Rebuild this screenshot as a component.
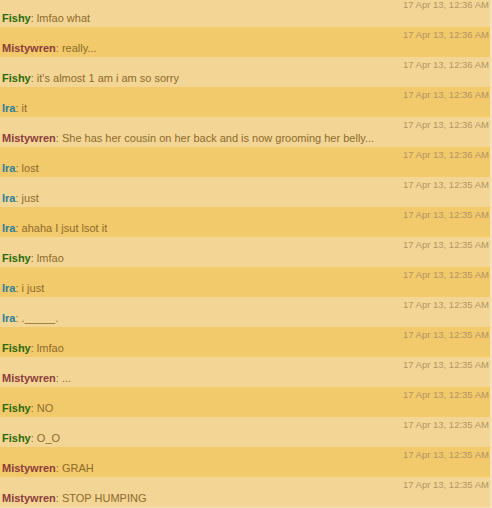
import React from "react";

const msgs = [
  ["Fishy", "lmfao what", "12:36"],
  ["Mistywren", "really...", "12:36"],
  ["Fishy", "it's almost 1 am i am so sorry", "12:36"],
  ["Ira", "it", "12:36"],
  ["Mistywren", "She has her cousin on her back and is now grooming her belly...", "12:36"],
  ["Ira", "lost", "12:36"],
  ["Ira", "just", "12:35"],
  ["Ira", "ahaha I jsut lsot it", "12:35"],
  ["Fishy", "lmfao", "12:35"],
  ["Ira", "i just", "12:35"],
  ["Ira", "._____.", "12:35"],
  ["Fishy", "lmfao", "12:35"],
  ["Mistywren", "...", "12:35"],
  ["Fishy", "NO", "12:35"],
  ["Fishy", "O_O", "12:35"],
  ["Mistywren", "GRAH", "12:35"],
  ["Mistywren", "STOP HUMPING", "12:35"],
];

const nameCls = {
  Fishy: "text-[#2c6b0c]",
  Mistywren: "text-[#8c3d3a]",
  Ira: "text-[#2c7e9c]",
};

export default function App() {
  return (
    <div className="h-[508px] w-[492px] overflow-hidden bg-[#f4e2b8] font-['Liberation_Sans',Arial,sans-serif]">
      <div className="mt-[-3px] w-[490px]">
        {msgs.map(([n, t, time], i) => (
          <div
            key={i}
            className={`h-[30px] ${i % 2 === 0 ? "bg-[#f3d596]" : "bg-[#f2c96b]"}`}
          >
            <div className="pt-[2px] pr-[1px] text-right text-[9.5px] leading-[12px] text-[#b39565]">
              17 Apr 13, {time} AM
            </div>
            <div className="pl-[2px] text-[11px] leading-[14px] text-[#8d6b2b]">
              <span className={`font-bold ${nameCls[n]}`}>{n}</span>: {t}
            </div>
          </div>
        ))}
      </div>
    </div>
  );
}
